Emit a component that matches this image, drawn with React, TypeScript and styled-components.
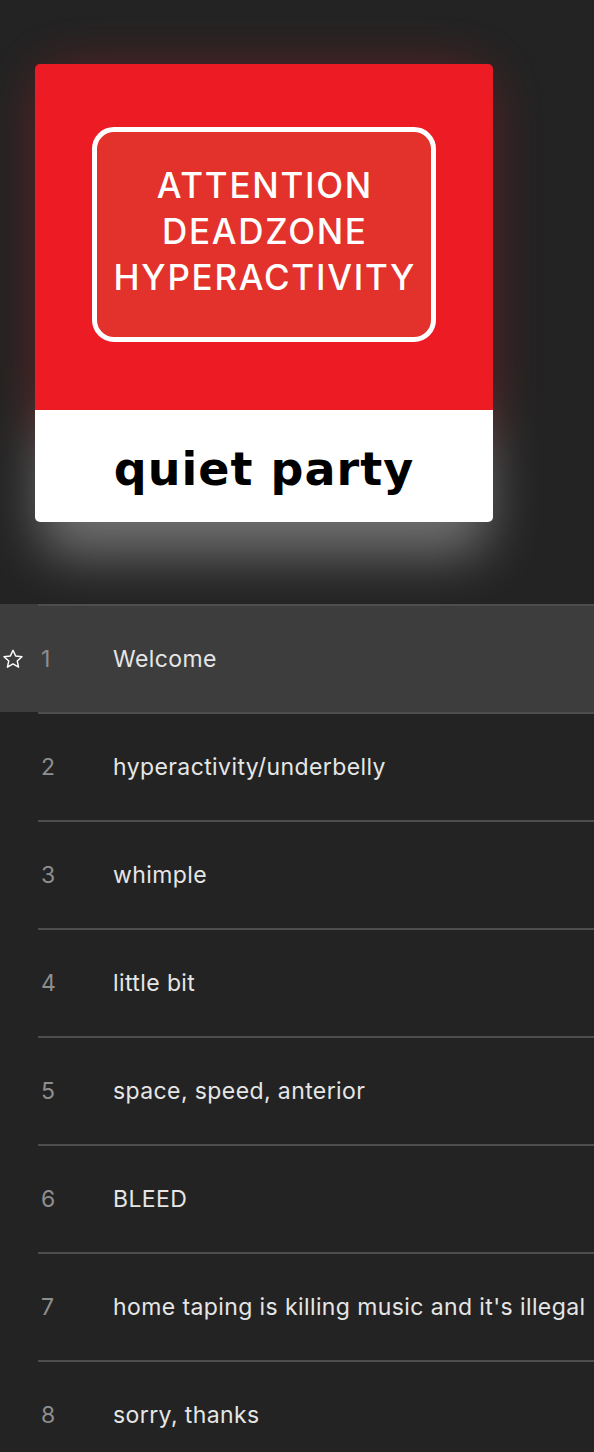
import React from "react";
import styled, { createGlobalStyle } from "styled-components";

const Global = createGlobalStyle`
  html, body { margin: 0; padding: 0; background: #232323; }
  body { font-family: Inter, "Noto Sans", sans-serif; -webkit-font-smoothing: antialiased; }
`;

const Page = styled.div`
  width: 594px;
  min-height: 1452px;
  background: #232323;
  overflow: hidden;
`;

const Header = styled.div`
  height: 604px;
  padding: 64px 0 0 35px;
  box-sizing: border-box;
`;

const Art = styled.div`
  position: relative;
  width: 458px;
  height: 458px;
  display: flex;
  flex-direction: column;
  &::before {
    content: "";
    position: absolute;
    left: 4px;
    right: 4px;
    top: 6px;
    bottom: -34px;
    border-radius: 30px;
    background: linear-gradient(#ed1c24 0%, #ed1c24 68%, #ffffff 80%, #ffffff 100%);
    filter: blur(26px);
    opacity: 0.34;
    z-index: 0;
  }
`;

const Cover = styled.div`
  position: relative;
  z-index: 1;
  flex: 1;
  display: flex;
  flex-direction: column;
  border-radius: 5px;
  overflow: hidden;
`;

const RedPart = styled.div`
  height: 346px;
  background: #ed1c24;
  display: flex;
  justify-content: center;
  padding-top: 63px;
  box-sizing: border-box;
`;

const Sign = styled.div`
  width: 344px;
  height: 215px;
  box-sizing: border-box;
  border: 5px solid #ffffff;
  border-radius: 22px;
  background: #e2322b;
  display: flex;
  flex-direction: column;
  align-items: center;
  justify-content: center;
  padding-bottom: 8px;
`;

const SignLine = styled.div`
  color: #ffffff;
  font-family: Inter, "Noto Sans", sans-serif;
  font-weight: 500;
  font-size: 35px;
  line-height: 46px;
  letter-spacing: 1.7px;
  margin-right: -1.7px;
`;

const WhitePart = styled.div`
  flex: 1;
  background: #ffffff;
  display: flex;
  align-items: center;
  justify-content: center;
  padding-top: 6px;
`;

const Title = styled.div`
  color: #000;
  font-family: "DejaVu Sans", sans-serif;
  font-weight: 700;
  font-size: 46px;
  letter-spacing: 1px;
`;

const List = styled.div`
  display: flex;
  flex-direction: column;
`;

const Row = styled.div<{ $active?: boolean }>`
  background: ${(p) => (p.$active ? "#3d3d3d" : "transparent")};
  display: flex;
  flex-direction: column;
`;

const Separator = styled.div`
  height: 1.5px;
  margin-left: 38px;
  background: #4d4d4d;
`;

const RowBody = styled.div`
  height: 106.5px;
  display: grid;
  grid-template-columns: 41px 72px 1fr;
  align-items: center;
`;

const StarCell = styled.div`
  display: flex;
  align-items: center;
  padding-left: 2px;
`;

const Num = styled.div`
  color: #8e8e8e;
  font-size: 23px;
  font-family: Inter, "Noto Sans", sans-serif;
`;

const Name = styled.div`
  color: #e6e6e6;
  font-size: 23px;
  letter-spacing: 0.4px;
  font-family: Inter, "Noto Sans", sans-serif;
  white-space: nowrap;
`;

const StarIcon = () => (
  <svg width="22" height="22" viewBox="0 0 24 24" fill="none" stroke="#ffffff" strokeWidth="1.6" strokeLinejoin="round">
    <path d="M12 2.5l2.9 6.3 6.9.7-5.2 4.6 1.5 6.8L12 17.4l-6.1 3.5 1.5-6.8-5.2-4.6 6.9-.7z" />
  </svg>
);

const tracks = [
  "Welcome",
  "hyperactivity/underbelly",
  "whimple",
  "little bit",
  "space, speed, anterior",
  "BLEED",
  "home taping is killing music and it's illegal",
  "sorry, thanks",
];

export default function App() {
  return (
    <Page>
      <Global />
      <Header>
        <Art>
          <Cover>
            <RedPart>
              <Sign>
                <SignLine>ATTENTION</SignLine>
                <SignLine>DEADZONE</SignLine>
                <SignLine>HYPERACTIVITY</SignLine>
              </Sign>
            </RedPart>
            <WhitePart>
              <Title>quiet party</Title>
            </WhitePart>
          </Cover>
        </Art>
      </Header>
      <List>
        {tracks.map((t, i) => (
          <Row key={i} $active={i === 0}>
            <Separator />
            <RowBody>
              <StarCell>{i === 0 ? <StarIcon /> : null}</StarCell>
              <Num>{i + 1}</Num>
              <Name>{t}</Name>
            </RowBody>
          </Row>
        ))}
      </List>
    </Page>
  );
}
